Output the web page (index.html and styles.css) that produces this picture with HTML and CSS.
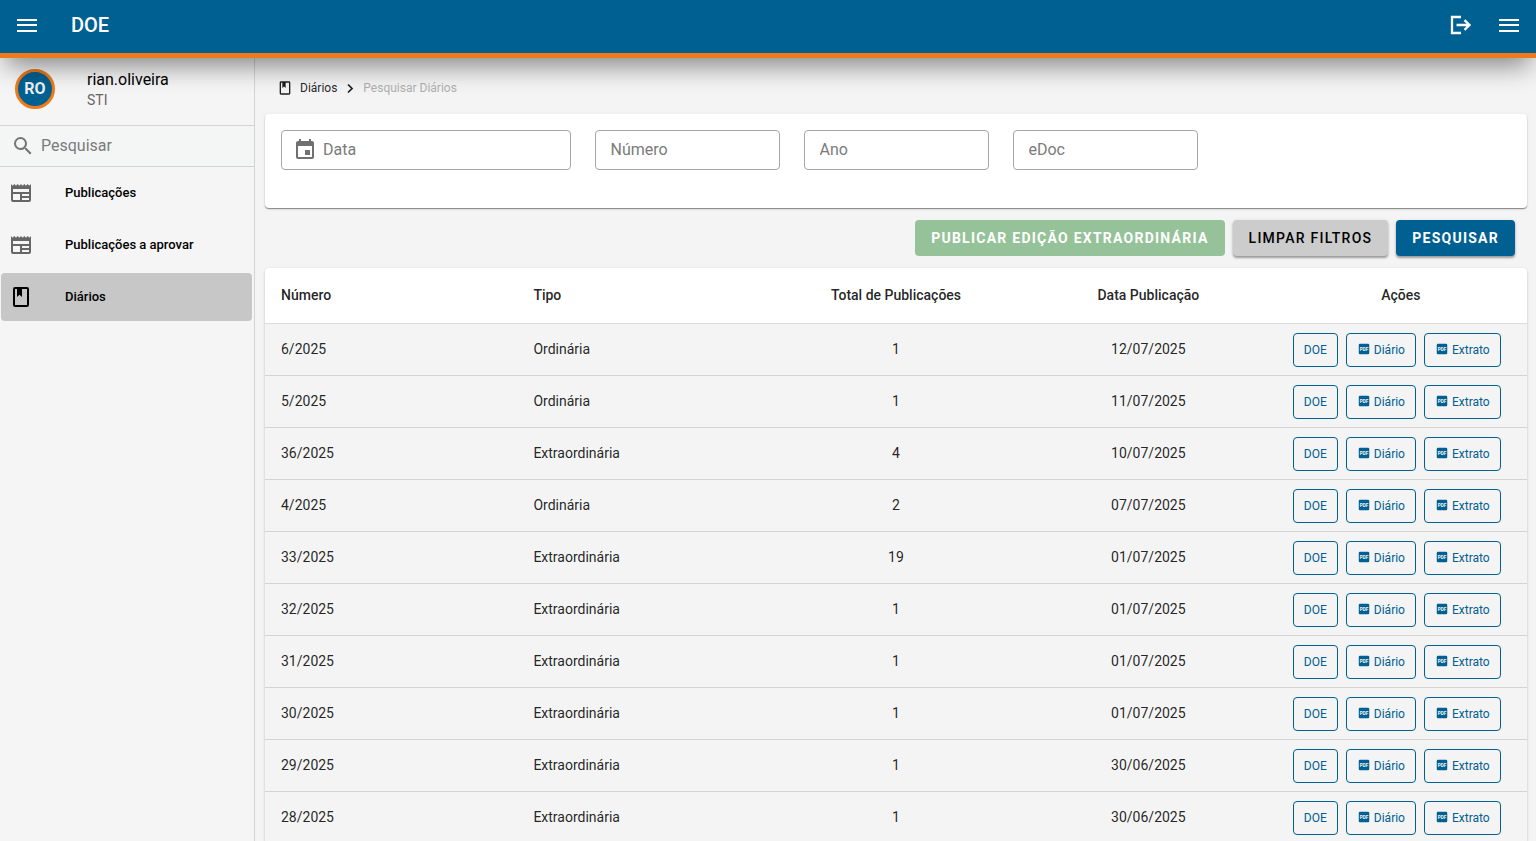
FILE: index.html
```
<!DOCTYPE html>
<html lang="pt-BR">
<head>
    <meta charset="UTF-8">
    <meta name="viewport" content="width=device-width, initial-scale=1.0">
    <title>DOE</title>
    <link rel="stylesheet" href="styles.css">
</head>
<body>
    <svg class="sprite" aria-hidden="true">
        <symbol id="i-menu" viewBox="0 0 24 24">
            <path d="M2 6H22V8H2ZM2 11H22V13H2ZM2 17H22V19H2Z"/>
        </symbol>
        <symbol id="i-logout" viewBox="0 0 24 24">
            <path d="M12 4H3V20H12M7.500 12H20.500M15.500 7.200L20.500 12L15.500 16.800" fill="none" stroke="currentColor" stroke-width="2.300"/>
        </symbol>
        <symbol id="i-search" viewBox="0 0 24 24">
            <path d="M9.500 3A6.500 6.500 0 0 1 16 9.500C16 11.110 15.410 12.590 14.440 13.730L14.710 14H15.500L20.500 19L19 20.500L14 15.500V14.710L13.730 14.440C12.590 15.410 11.110 16 9.500 16A6.500 6.500 0 0 1 3 9.500A6.500 6.500 0 0 1 9.500 3M9.500 5C7 5 5 7 5 9.500C5 12 7 14 9.500 14C12 14 14 12 14 9.500C14 7 12 5 9.500 5Z"/>
        </symbol>
        <symbol id="i-news" viewBox="0 0 24 24">
            <path d="M20,11H4V8H20M20,15H13V13H20M20,19H13V17H20M11,19H4V13H11M20.330,4.670L18.670,3L17,4.670L15.330,3L13.670,4.670L12,3L10.330,4.670L8.670,3L7,4.670L5.330,3L3.670,4.670L2,3V19A2,2 0 0,0 4,21H20A2,2 0 0,0 22,19V3L20.330,4.670Z"/>
        </symbol>
        <symbol id="i-book" viewBox="0 0 24 24">
            <path d="M18,2A2,2 0 0,1 20,4V20A2,2 0 0,1 18,22H6A2,2 0 0,1 4,20V4A2,2 0 0,1 6,2H18M18,4H13V12L10.500,9.750L8,12V4H6V20H18V4Z"/>
        </symbol>
        <symbol id="i-chevron" viewBox="0 0 24 24">
            <path d="M8 5L16 13L8 21" fill="none" stroke="currentColor" stroke-width="3.500"/>
        </symbol>
        <symbol id="i-calendar" viewBox="0 0 24 24">
            <path d="M19,19H5V8H19M16,1V3H8V1H6V3H5C3.890,3 3,3.890 3,5V19A2,2 0 0,0 5,21H19A2,2 0 0,0 21,19V5C21,3.890 20.100,3 19,3H18V1M17,12H12V17H17V12Z"/>
        </symbol>
    </svg>

    <header class="topbar">
        <button class="icon-btn" aria-label="Menu"><svg><use href="#i-menu"/></svg></button>
        <h1 class="brand">DOE</h1>
        <button class="icon-btn" aria-label="Sair"><svg><use href="#i-logout"/></svg></button>
        <button class="icon-btn" aria-label="Opções"><svg><use href="#i-menu"/></svg></button>
    </header>

    <div class="layout">
        <aside class="sidebar">
            <div class="user">
                <div class="avatar">RO</div>
                <div class="user-info">
                    <div class="user-name">rian.oliveira</div>
                    <div class="user-unit">STI</div>
                </div>
            </div>
            <label class="side-search">
                <svg><use href="#i-search"/></svg>
                <input type="text" placeholder="Pesquisar" aria-label="Pesquisar">
            </label>
            <nav class="nav">
                <a href="#" class="nav-item"><svg><use href="#i-news"/></svg><span>Publicações</span></a>
                <a href="#" class="nav-item"><svg><use href="#i-news"/></svg><span>Publicações a aprovar</span></a>
                <a href="#" class="nav-item active"><svg><use href="#i-book"/></svg><span>Diários</span></a>
            </nav>
        </aside>

        <main class="content">
            <nav class="breadcrumbs">
                <svg><use href="#i-book"/></svg>
                <a href="#">Diários</a>
                <svg class="sep"><use href="#i-chevron"/></svg>
                <span>Pesquisar Diários</span>
            </nav>

            <form class="filters">
                <label class="field wide">
                    <svg><use href="#i-calendar"/></svg>
                    <input type="text" placeholder="Data" aria-label="Data">
                </label>
                <label class="field"><input type="text" placeholder="Número" aria-label="Número"></label>
                <label class="field"><input type="text" placeholder="Ano" aria-label="Ano"></label>
                <label class="field"><input type="text" placeholder="eDoc" aria-label="eDoc"></label>
            </form>

            <div class="actions">
                <button class="btn btn-green" disabled>Publicar edição extraordinária</button>
                <button class="btn btn-grey">Limpar filtros</button>
                <button class="btn btn-blue">Pesquisar</button>
            </div>

            <table class="table">
                <thead>
                    <tr>
                        <th>Número</th>
                        <th>Tipo</th>
                        <th class="center">Total de Publicações</th>
                        <th class="center">Data Publicação</th>
                        <th class="center">Ações</th>
                    </tr>
                </thead>
                <tbody id="rows"></tbody>
            </table>
        </main>
    </div>

    <script>
        const diarios = [
            ['6/2025', 'Ordinária', 1, '12/07/2025'],
            ['5/2025', 'Ordinária', 1, '11/07/2025'],
            ['36/2025', 'Extraordinária', 4, '10/07/2025'],
            ['4/2025', 'Ordinária', 2, '07/07/2025'],
            ['33/2025', 'Extraordinária', 19, '01/07/2025'],
            ['32/2025', 'Extraordinária', 1, '01/07/2025'],
            ['31/2025', 'Extraordinária', 1, '01/07/2025'],
            ['30/2025', 'Extraordinária', 1, '01/07/2025'],
            ['29/2025', 'Extraordinária', 1, '30/06/2025'],
            ['28/2025', 'Extraordinária', 1, '30/06/2025']
        ];

        const pdfIcon = `
            <svg viewBox="0 0 24 24">
                <rect x="3" y="3" width="18" height="18" rx="2"/>
                <text x="12" y="15" text-anchor="middle" class="pdf-label">PDF</text>
            </svg>`;

        document.getElementById('rows').innerHTML = diarios.map(([numero, tipo, total, data]) => `
            <tr>
                <td>${numero}</td>
                <td>${tipo}</td>
                <td class="center">${total}</td>
                <td class="center">${data}</td>
                <td class="cell-actions">
                    <div class="row-actions">
                        <button class="btn-small">DOE</button>
                        <button class="btn-small">${pdfIcon}Diário</button>
                        <button class="btn-small">${pdfIcon}Extrato</button>
                    </div>
                </td>
            </tr>`).join('');
    </script>
</body>
</html>
```
FILE: styles.css
```
* {
    box-sizing: border-box;
}
body {
    margin: 0;
    height: 100vh;
    display: flex;
    flex-direction: column;
    overflow: hidden;
    font-family: Roboto, sans-serif;
    font-size: 14px;
    color: rgba(0, 0, 0, 0.87);
    background: #f5f5f5;
}
svg {
    width: 24px;
    height: 24px;
    fill: currentColor;
    flex: none;
}
.sprite {
    position: absolute;
    width: 0;
    height: 0;
}
a {
    color: inherit;
    text-decoration: none;
}
button {
    font-family: inherit;
    cursor: pointer;
}
input {
    flex: 1;
    min-width: 0;
    padding: 0 0 2px;
    border: none;
    outline: none;
    background: none;
    font-family: inherit;
    font-size: 16px;
    color: inherit;
}
input::placeholder {
    color: #7b7b7b;
    opacity: 1;
}

/* Top bar */
.topbar {
    position: relative;
    z-index: 2;
    flex: none;
    display: flex;
    align-items: center;
    gap: 24px;
    height: 58px;
    padding: 0 15px 4px;
    background: #006092;
    border-bottom: 5px solid #ee7a1a;
    color: #fff;
    box-shadow: 0 14px 26px -6px rgba(0, 0, 0, 0.45);
}
.icon-btn {
    display: flex;
    padding: 0;
    border: none;
    background: none;
    color: inherit;
}
.brand {
    flex: 1;
    margin: 0 8px;
    font-size: 20px;
    font-weight: 500;
    line-height: 24px;
}

.layout {
    flex: 1;
    display: flex;
    min-height: 0;
}

/* Sidebar */
.sidebar {
    flex: none;
    width: 255px;
    border-right: 1px solid #d4d4d4;
}
.user {
    display: flex;
    align-items: center;
    gap: 32px;
    height: 68px;
    padding: 0 15px 6px;
    border-bottom: 1px solid #d4d4d4;
}
.avatar {
    display: flex;
    align-items: center;
    justify-content: center;
    width: 40px;
    height: 40px;
    border: 3px solid #ee7a1a;
    border-radius: 50%;
    background: #006092;
    color: #eee;
    font-size: 16px;
    font-weight: 700;
}
.user-info {
    padding-top: 3px;
    line-height: 20px;
}
.user-name {
    font-size: 16px;
    color: #000;
}
.user-unit {
    color: #666;
}
.side-search {
    display: flex;
    align-items: center;
    gap: 6px;
    height: 41px;
    padding: 0 11px;
    border-bottom: 1px solid #d4d4d4;
    background: #f4f6f6;
    color: #757575;
}
.nav {
    display: flex;
    flex-direction: column;
    gap: 4px;
    padding: 2px 2px 2px 1px;
}
.nav-item {
    display: flex;
    align-items: center;
    gap: 32px;
    height: 48px;
    padding: 0 8px;
    border-radius: 4px;
    font-size: 13px;
    font-weight: 500;
    color: #000;
}
.nav-item span {
    padding-bottom: 2px;
}
.nav-item svg {
    fill: #666;
}
.nav-item.active {
    background: #c7c7c7;
}
.nav-item.active svg {
    fill: #000;
}

/* Content */
.content {
    flex: 1;
    min-width: 0;
    padding: 0 9px 0 10px;
    background: #f4f4f4;
}
.breadcrumbs {
    display: flex;
    align-items: center;
    gap: 7px;
    height: 56px;
    padding: 4px 12px 0;
    font-size: 12px;
}
.breadcrumbs svg {
    width: 16px;
    height: 16px;
}
.breadcrumbs .sep {
    width: 12px;
    height: 12px;
}
.breadcrumbs span {
    color: #b0b0b0;
}
.filters {
    display: grid;
    grid-template-columns: repeat(12, 1fr);
    column-gap: 24px;
    padding: 16px 16px 38px;
    border-radius: 4px;
    background: #fff;
    box-shadow: 0 1px 1px rgba(0, 0, 0, 0.4), 0 1px 3px rgba(0, 0, 0, 0.12);
}
.field {
    grid-column: span 2;
    display: flex;
    align-items: center;
    gap: 6px;
    height: 40px;
    padding: 0 15px;
    border: 1px solid #a6a6a6;
    border-radius: 4px;
}
.field.wide {
    grid-column: span 3;
    padding: 0 11px;
}
.field svg {
    fill: #707070;
}
.actions {
    display: flex;
    justify-content: flex-end;
    gap: 8px;
    padding: 12px;
}
.btn {
    height: 36px;
    padding: 0 16px;
    border: none;
    border-radius: 4px;
    font-size: 14px;
    font-weight: 500;
    letter-spacing: 0.089em;
    text-transform: uppercase;
    box-shadow: 0 2px 2px rgba(0, 0, 0, 0.3), 0 1px 4px rgba(0, 0, 0, 0.12);
}
.btn-green {
    background: #96c299;
    color: #fff;
    font-weight: 700;
    box-shadow: none;
}
.btn-grey {
    background: #ccc;
    color: #000;
}
.btn-blue {
    background: #006092;
    color: #fff;
    font-weight: 700;
}

/* Table */
.table {
    width: 100%;
    table-layout: fixed;
    border-collapse: separate;
    border-spacing: 0;
    border-radius: 4px;
    box-shadow: 0 1px 3px rgba(0, 0, 0, 0.2);
}
.table th {
    height: 56px;
    padding: 0 16px 2px;
    background: #fff;
    border-bottom: 1px solid #dcdcdc;
    font-weight: 500;
    text-align: left;
}
.table th:first-child {
    border-top-left-radius: 4px;
}
.table th:last-child {
    border-top-right-radius: 4px;
}
.table td {
    height: 52px;
    padding: 0 16px 2px;
    border-bottom: 1px solid #d4d4d4;
}
.table .center {
    text-align: center;
}
.table .cell-actions {
    padding: 1px 24px 0 16px;
}
.row-actions {
    display: flex;
    justify-content: center;
    gap: 8px;
}
.btn-small {
    display: flex;
    align-items: center;
    gap: 3px;
    height: 34px;
    padding: 0 10px;
    border: 1px solid #006092;
    border-radius: 4px;
    background: none;
    color: #006092;
    font-size: 12px;
}
.btn-small svg {
    width: 14px;
    height: 14px;
    margin-bottom: 3px;
}
.pdf-label {
    fill: #f4f4f4;
    font-size: 8px;
    font-weight: 700;
}
```
